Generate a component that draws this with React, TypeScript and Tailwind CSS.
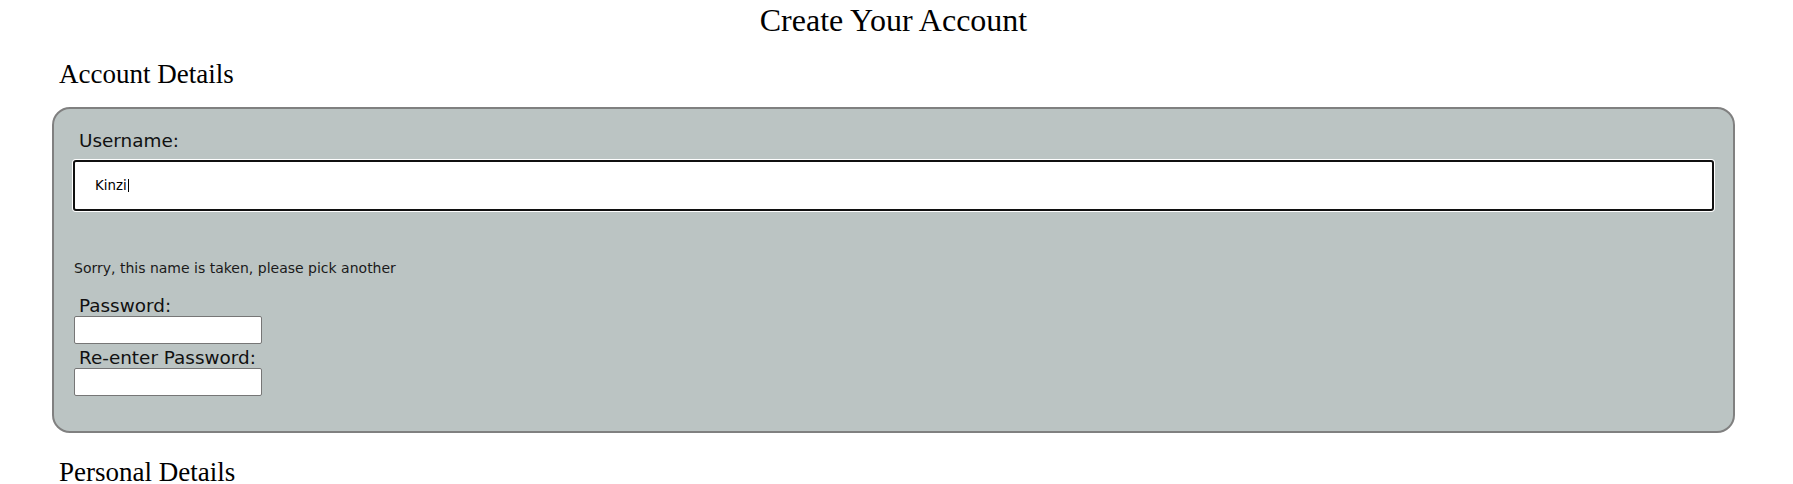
import React from "react";

export default function App() {
  const serif = "font-['Liberation_Serif','Times_New_Roman',serif]";
  const sans = "font-['DejaVu_Sans','Verdana',sans-serif]";
  return (
    <div className="w-full bg-white pr-[6px] text-black">
      <div className="ml-[52px] mr-[52px] pb-[20px]">
        <h1 className={`${serif} pt-[2px] text-center text-[32px] leading-[36px] font-normal`}>
          Create Your Account
        </h1>
        <h2 className={`${serif} mt-[20px] ml-[7px] text-[27px] leading-[32px] font-normal`}>
          Account Details
        </h2>
        <div className={`${sans} mt-[17px] rounded-[18px] border-2 border-[#808080] bg-[#bbc4c3] px-[20px] pt-[21px] pb-[35px]`}>
          <label className="ml-[5px] block text-[18.4px] leading-[21px] text-[#111]">Username:</label>
          <div className="-mx-[1px] mt-[9px] flex h-[51px] items-center rounded-[3px] border-2 border-[#101010] bg-white pl-[20px] text-[13.33px] leading-[15px] text-black shadow-[0_0_0_1px_#ffffff]">
            <span>Kinzi</span>
            <span className="ml-[1px] inline-block h-[13px] w-px bg-black" />
          </div>
          <p className="mt-[50px] text-[14px] leading-[15px] text-[#1a1a1a]">
            Sorry, this name is taken, please pick another
          </p>
          <label className="mt-[19px] ml-[5px] block text-[18.4px] leading-[21px] text-[#111]">Password:</label>
          <input
            type="password"
            className="block h-[28px] w-[188px] rounded-[2px] border border-[#767676] bg-white outline-none"
          />
          <label className="mt-[3px] ml-[5px] block text-[18.4px] leading-[21px] text-[#111]">Re-enter Password:</label>
          <input
            type="password"
            className="block h-[28px] w-[188px] rounded-[2px] border border-[#767676] bg-white outline-none"
          />
        </div>
        <h2 className={`${serif} mt-[23px] ml-[7px] text-[27px] leading-[32px] font-normal`}>
          Personal Details
        </h2>
      </div>
    </div>
  );
}
